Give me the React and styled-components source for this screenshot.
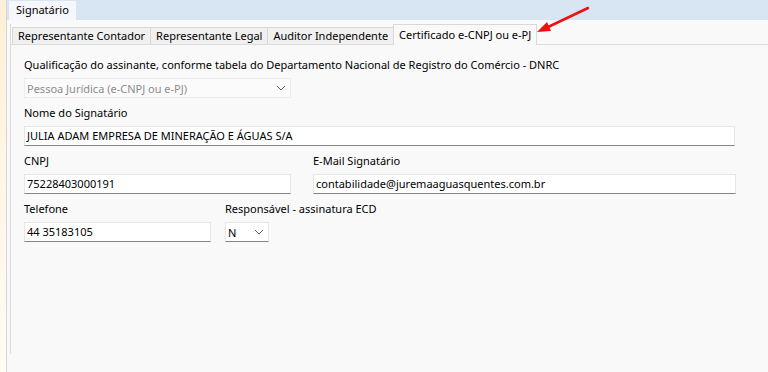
import styled, { createGlobalStyle } from 'styled-components'

const GlobalStyle = createGlobalStyle`
  body {
    margin: 0;
    background: #f9f9f9;
    font-family: "Noto Sans", "Liberation Sans", sans-serif;
    font-size: 11px;
    color: #000;
  }
`

const Desktop = styled.div`
  position: relative;
  min-height: 372px;
  padding-left: 6px;
  background: linear-gradient(180deg, #fdf0d8 0%, #fff8ea 60%, #fffcf5 100%);
  overflow: hidden;
`

const Window = styled.div`
  min-height: 372px;
  background: #f9f9f9;
  border-left: 1px solid #d6d6d6;
`

const Header = styled.div`
  height: 20px;
  display: flex;
  align-items: flex-end;
  background: #d8e5f2;
`

const TopTab = styled.div`
  height: 19px;
  line-height: 18px;
  padding: 0 7px;
  margin-left: 2px;
  background: #f5f7fa;
`

const Body = styled.div`
  padding: 4px 0 0 3px;
`

const Tabs = styled.div`
  border-left: 1px solid #dcdcdc;
  min-height: 330px;
`

const TabStrip = styled.div`
  display: flex;
  align-items: flex-end;
  height: 20px;
  padding-left: 1px;
  border-bottom: 1px solid #dcdcdc;
`

const Tab = styled.div`
  box-sizing: border-box;
  height: ${p => (p.$active ? '21px' : '17px')};
  line-height: ${p => (p.$active ? '19px' : '16px')};
  margin-bottom: ${p => (p.$active ? '-1px' : '0')};
  padding: 0 5px;
  background: ${p => (p.$active ? '#f9f9f9' : '#f0f0f0')};
  border: 1px solid #d9d9d9;
  border-bottom: none;
  margin-right: -1px;
  white-space: nowrap;
`

const Panel = styled.div`
  padding: 12px 0 0 13px;
  display: flex;
  flex-direction: column;
  gap: 7px;
`

const FormRow = styled.div`
  display: flex;
  gap: ${p => p.$gap || 22}px;
`

const Field = styled.div`
  display: flex;
  flex-direction: column;
  gap: 5px;
  width: ${p => p.$width}px;
`

const Label = styled.div`
  height: 16px;
  line-height: 16px;
  white-space: nowrap;
`

const Input = styled.div`
  box-sizing: border-box;
  height: 20px;
  line-height: 18px;
  padding: 0 2px;
  background: #fff;
  border: 1px solid #e6e6e6;
  border-bottom-color: #858585;
  white-space: nowrap;
`

const Select = styled.div`
  box-sizing: border-box;
  height: 20px;
  display: flex;
  align-items: center;
  justify-content: space-between;
  padding: 0 4px 0 2px;
  background: ${p => (p.$disabled ? '#fbfbfb' : '#fff')};
  color: ${p => (p.$disabled ? '#8c8c8c' : '#000')};
  border: 1px solid ${p => (p.$disabled ? '#ececec' : '#e6e6e6')};
  border-bottom-color: ${p => (p.$disabled ? '#ececec' : '#858585')};
  white-space: nowrap;
`

const Arrow = styled.svg`
  position: absolute;
  left: 530px;
  top: 2px;
`

function Chevron () {
  return (
    <svg width="10" height="6" viewBox="0 0 10 6">
      <polyline points="1,1 5,5 9,1" fill="none" stroke="#606060" strokeWidth="1" />
    </svg>
  )
}

export default function App () {
  return (
    <Desktop>
      <GlobalStyle />
      <Window>
        <Header>
          <TopTab>Signatário</TopTab>
        </Header>
        <Body>
          <Tabs>
            <TabStrip>
              <Tab>Representante Contador</Tab>
              <Tab>Representante Legal</Tab>
              <Tab>Auditor Independente</Tab>
              <Tab $active>Certificado e-CNPJ ou e-PJ</Tab>
            </TabStrip>
            <Panel>
              <Field $width={267}>
                <Label>Qualificação do assinante, conforme tabela do Departamento Nacional de Registro do Comércio - DNRC</Label>
                <Select $disabled>
                  Pessoa Jurídica (e-CNPJ ou e-PJ)
                  <Chevron />
                </Select>
              </Field>
              <Field $width={711}>
                <Label>Nome do Signatário</Label>
                <Input>JULIA ADAM EMPRESA DE MINERAÇÃO E ÁGUAS S/A</Input>
              </Field>
              <FormRow>
                <Field $width={267}>
                  <Label>CNPJ</Label>
                  <Input>75228403000191</Input>
                </Field>
                <Field $width={423}>
                  <Label>E-Mail Signatário</Label>
                  <Input>contabilidade@juremaaguasquentes.com.br</Input>
                </Field>
              </FormRow>
              <FormRow $gap={14}>
                <Field $width={187}>
                  <Label>Telefone</Label>
                  <Input>44 35183105</Input>
                </Field>
                <Field $width={44}>
                  <Label>Responsável - assinatura ECD</Label>
                  <Select>
                    N
                    <Chevron />
                  </Select>
                </Field>
              </FormRow>
            </Panel>
          </Tabs>
        </Body>
      </Window>
      <Arrow width="64" height="34" viewBox="530 2 64 34">
        <line x1="588" y1="8" x2="546" y2="28" stroke="#ee1111" strokeWidth="2.5" strokeLinecap="round" />
        <polygon points="537,32 551,31 547,22" fill="#ee1111" />
      </Arrow>
    </Desktop>
  )
}
